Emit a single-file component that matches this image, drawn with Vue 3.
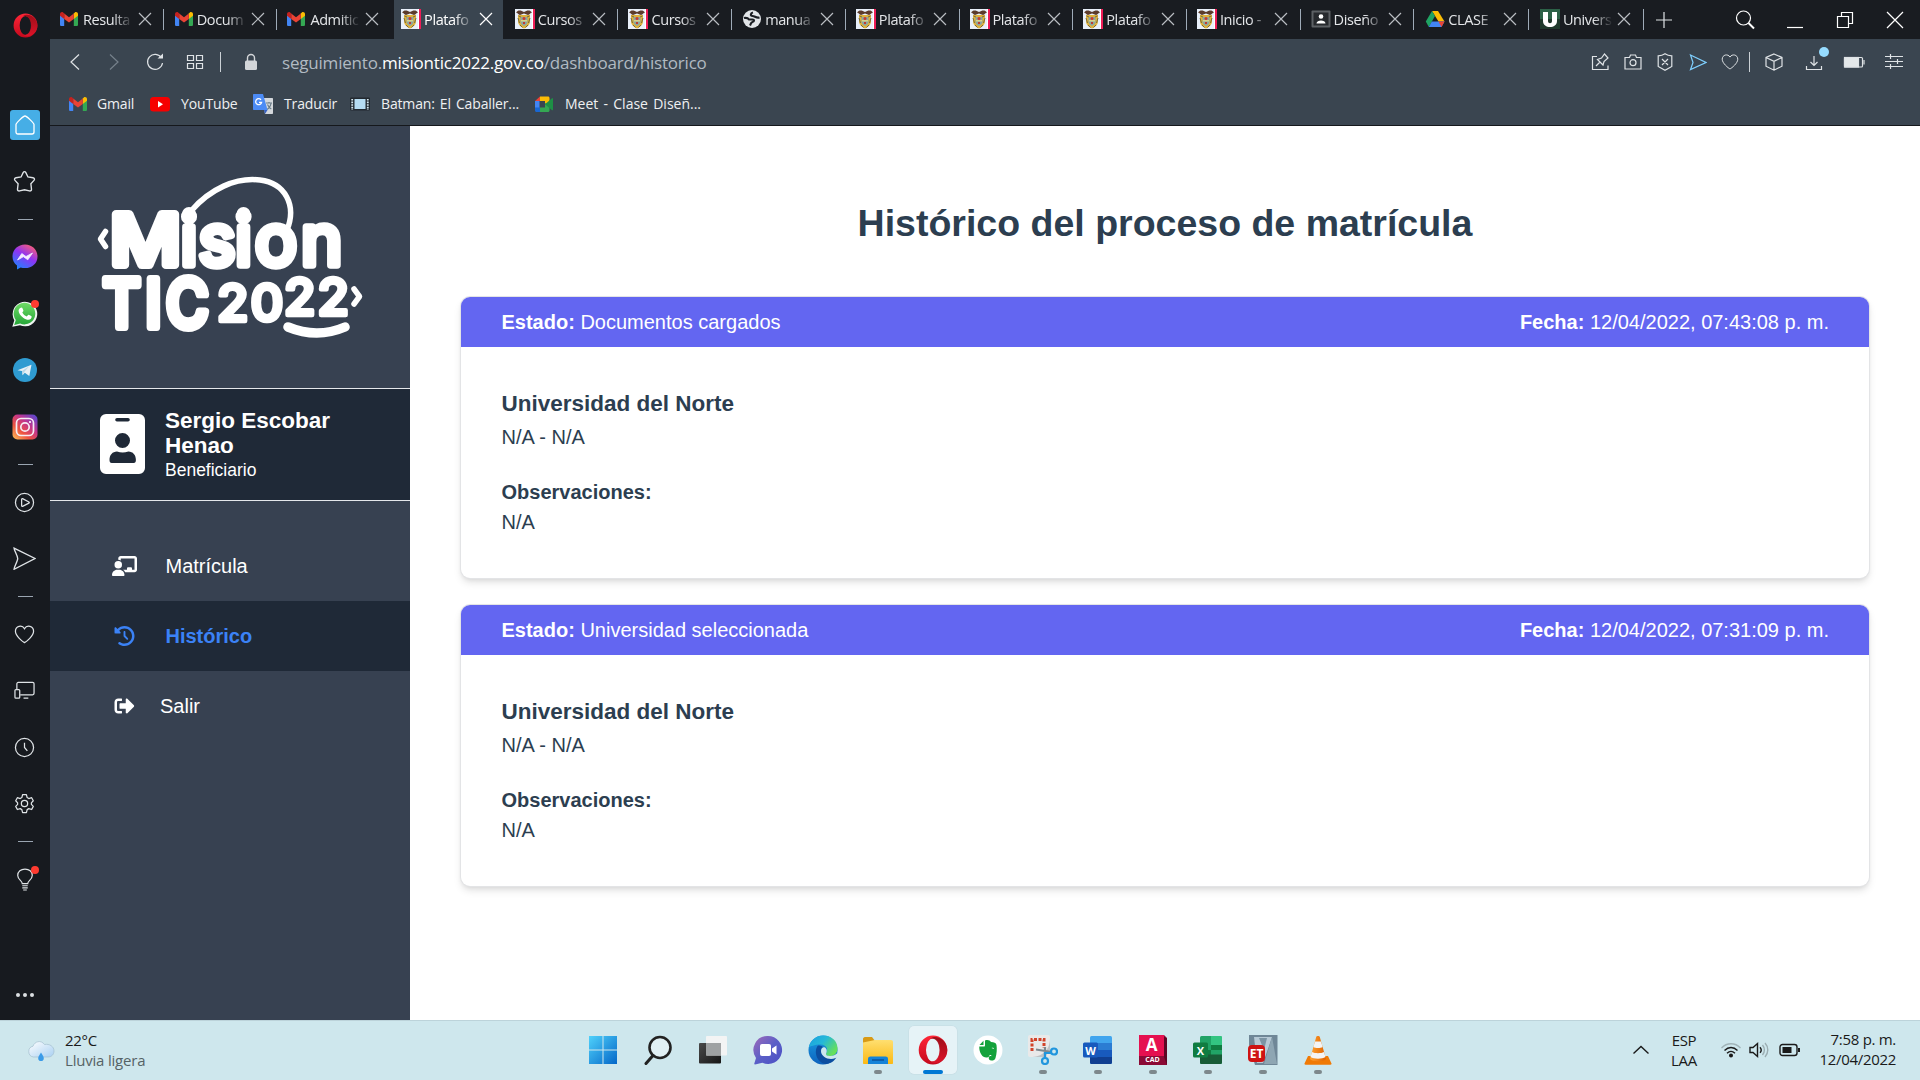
<script setup>
const tabs = [
  { icon: 'gmail', label: 'Resulta' },
  { icon: 'gmail', label: 'Docum' },
  { icon: 'gmail', label: 'Admitic' },
  { icon: 'crest', label: 'Platafo', active: true },
  { icon: 'crest', label: 'Cursos' },
  { icon: 'crest', label: 'Cursos' },
  { icon: 'globe', label: 'manua' },
  { icon: 'crest', label: 'Platafo' },
  { icon: 'crest', label: 'Platafo' },
  { icon: 'crest', label: 'Platafo' },
  { icon: 'crest', label: 'Inicio -' },
  { icon: 'classroom', label: 'Diseño' },
  { icon: 'drive', label: 'CLASE' },
  { icon: 'uni', label: 'Univers' },
]
const bookmarks = [
  { icon: 'gmail', label: 'Gmail', w: 82 },
  { icon: 'youtube', label: 'YouTube', w: 103 },
  { icon: 'translate', label: 'Traducir', w: 97 },
  { icon: 'film', label: 'Batman: El Caballer...', w: 184 },
  { icon: 'meet', label: 'Meet - Clase Diseñ...', w: 180 },
]
const rail = [
  'home', 'star', '-', 'messenger', 'whatsapp', 'telegram', 'instagram', '-',
  'play', 'send', '-', 'heart', 'devices', 'clock', 'gear', '-', 'bulb',
]
const actions = ['pin', 'camera', 'shield', 'flow', 'heart']
const tools = ['cube', 'download', 'battery', 'sliders']
const records = [
  { state: 'Documentos cargados', date: '12/04/2022, 07:43:08 p. m.' },
  { state: 'Universidad seleccionada', date: '12/04/2022, 07:31:09 p. m.' },
]
const apps = [
  { id: 'windows' }, { id: 'search' }, { id: 'taskview' }, { id: 'chat' }, { id: 'edge' },
  { id: 'explorer', open: true }, { id: 'opera', active: true }, { id: 'evernote' },
  { id: 'snip', open: true }, { id: 'word', open: true, mark: 'W' }, { id: 'autocad', open: true, mark: 'A', sub: 'CAD' },
  { id: 'excel', open: true, mark: 'X' }, { id: 'etabs', open: true, mark: 'ET' }, { id: 'vlc', open: true },
]
</script>

<template>
  <div class="desktop">
    <svg class="defs" aria-hidden="true">
      <defs>
        <linearGradient id="gOpera" x1="0" y1="0" x2="0" y2="1"><stop offset="0" stop-color="#ff2637" /><stop offset="1" stop-color="#c4091d" /></linearGradient>
        <linearGradient id="gOperaR" x1="0" y1="0" x2="0" y2="1"><stop offset="0" stop-color="#8e0a14" /><stop offset="1" stop-color="#e0142a" /></linearGradient>
        <linearGradient id="gMess" x1="0.2" y1="1" x2="0.8" y2="0"><stop offset="0" stop-color="#1a86ff" /><stop offset=".55" stop-color="#9033f2" /><stop offset="1" stop-color="#ff6070" /></linearGradient>
        <linearGradient id="gInsta" x1="0" y1="1" x2="0.9" y2="0"><stop offset="0" stop-color="#fdc45a" /><stop offset=".35" stop-color="#ee5340" /><stop offset=".65" stop-color="#c1358e" /><stop offset="1" stop-color="#5a48cf" /></linearGradient>
        <linearGradient id="gWin" x1="0" y1="0" x2="1" y2="1"><stop offset="0" stop-color="#4fd1fb" /><stop offset="1" stop-color="#0467c8" /></linearGradient>
        <linearGradient id="gChat" x1="0" y1="0" x2="1" y2="1"><stop offset="0" stop-color="#a06ab8" /><stop offset=".5" stop-color="#5b5fc7" /><stop offset="1" stop-color="#4a4fc4" /></linearGradient>
        <linearGradient id="gEdge" x1="0" y1="0" x2="1" y2="0.6"><stop offset="0" stop-color="#1aa0e0" /><stop offset=".5" stop-color="#25b8d8" /><stop offset="1" stop-color="#66e05a" /></linearGradient>
        <linearGradient id="gEdge2" x1="0" y1="0" x2="0" y2="1"><stop offset="0" stop-color="#1b9de2" /><stop offset="1" stop-color="#0d62bd" /></linearGradient>
        <linearGradient id="gFolder" x1="0" y1="0" x2="0" y2="1"><stop offset="0" stop-color="#ffdf70" /><stop offset="1" stop-color="#fbb914" /></linearGradient>
        <linearGradient id="gCloud" x1="0" y1="0" x2="1" y2="1"><stop offset="0" stop-color="#ffffff" /><stop offset="1" stop-color="#a9d0f2" /></linearGradient>
        <linearGradient id="gCone" x1="0" y1="0" x2="1" y2="0"><stop offset="0" stop-color="#ffa230" /><stop offset="1" stop-color="#e06200" /></linearGradient>
        <linearGradient id="gGreen" x1="0" y1="0" x2="0" y2="1"><stop offset="0" stop-color="#6fdb66" /><stop offset="1" stop-color="#25a538" /></linearGradient>
        <linearGradient id="gDark" x1="0" y1="0" x2="1" y2="1"><stop offset="0" stop-color="#4a4a4a" /><stop offset="1" stop-color="#161616" /></linearGradient>
      </defs>

      <!-- favicons and bookmarks -->
      <symbol id="gmail" viewBox="0 0 20 20">
        <path d="M1 5.500v10.200c0 .7.6 1.300 1.300 1.300H5.200V8.500z" fill="#4285f4" />
        <path d="M19 5.500v10.200c0 .7-.6 1.300-1.300 1.300H14.800V8.500z" fill="#34a853" />
        <path d="M14.800 4.600V10L19 6.800V5c0-1.700-1.900-2.600-3.200-1.600z" fill="#fbbc04" />
        <path d="M5.200 10V4.600L10 8.200l4.800-3.600V10L10 13.600z" fill="#ea4335" />
        <path d="M1 5v1.800L5.200 10V4.600L4.200 3.400C2.900 2.400 1 3.300 1 5z" fill="#c5221f" />
      </symbol>
      <symbol id="crest" viewBox="0 0 20 20">
        <rect width="20" height="20" fill="#e9f0fa" /><rect x="17" width="1" height="20" fill="#fff" /><rect x="18" width="2" height="20" fill="#ee1c56" />
        <path d="M3 6h12v6c0 4-3 6-6 7.500C6 18 3 16 3 12z" fill="#dfb23a" />
        <path d="M1 3.500C3 .5 6 1 9 3c3-2 6-2.500 8 .5-2 0-2 2.500-4 2.500L9 4.500 5 6C3 6 3 3.500 1 3.500z" fill="#5c3b2b" />
        <path d="M5.500 8h7v5c0 2-2 3.200-3.500 3.900C7.500 16.200 5.500 15 5.500 13z" fill="#8ba6a0" />
        <path d="M6 11h6v1.500H6z" fill="#d9d38a" /><circle cx="9" cy="9.500" r="1.500" fill="#c93a2e" /><path d="M8 13h2v2H8z" fill="#be3b33" />
        <path d="M3 9l1.500 5M15 9l-1.500 5M5 16l2.500 2.500M13 16l-2.500 2.500M3.500 7l2.500 1M14.500 7L12 8" stroke="#7a6a3a" stroke-width="1" />
      </symbol>
      <symbol id="globe" viewBox="0 0 20 20">
        <circle cx="10" cy="10" r="9" fill="#e3e6e9" />
        <path d="M2 9c2-.5 4 0 5 1.500h3.500c2 0 2 2 0 2.500s-1.500 2-2.500 3.500M11 3.500C8.500 4 8 7 10.500 7s3.500 2.500 7 1.500" fill="none" stroke="#1b1e23" stroke-width="2.200" />
      </symbol>
      <symbol id="classroom" viewBox="0 0 20 20">
        <rect x=".5" y="1.500" width="19" height="17" rx="1" fill="#5c6064" /><rect x="2.500" y="3.500" width="15" height="13" fill="#26292d" />
        <circle cx="10" cy="7.500" r="2.300" fill="#fff" /><path d="M5.500 14.500c0-4 9-4 9 0z" fill="#fff" />
      </symbol>
      <symbol id="drive" viewBox="0 0 20 20">
        <path d="M7 2h6l6.500 10.500h-6z" fill="#fbbc04" /><path d="M7 2L.8 12.500 3.800 18l6.200-11z" fill="#1fa463" />
        <path d="M3.800 18l3-5.500h12.700L16.500 18z" fill="#4285f4" /><path d="M13.500 12.500h6L16.500 18z" fill="#ea4335" />
      </symbol>
      <symbol id="uni" viewBox="0 0 20 20">
        <rect width="20" height="20" fill="#2c6147" /><rect y="10" width="20" height="10" fill="#203a2d" />
        <path d="M3 3h5v9c0 3 4 3 4 0V3h5v9c0 8-14 8-14 0z" fill="#fff" />
      </symbol>
      <symbol id="youtube" viewBox="0 0 20 20"><rect y="3" width="20" height="14.500" rx="3.500" fill="#f60000" /><path d="M8 7l5 3.200-5 3.200z" fill="#fff" /></symbol>
      <symbol id="translate" viewBox="0 0 20 20">
        <path d="M9 4h10c.6 0 1 .4 1 1v14c0 .6-.4 1-1 1h-7z" fill="#d4d8dc" /><path d="M13 9h6M16 8v1.500M14 15.500c2.500-1.500 3.500-3 4-6M14.500 10.500c.8 2 2 3.500 3.800 4.500" stroke="#6a7c88" stroke-width="1.100" fill="none" />
        <path d="M1 0h9l4.500 16H1c-.6 0-1-.4-1-1V1c0-.6.4-1 1-1z" fill="#4c8bf5" /><path d="M14.500 16L12 20l-1-4z" fill="#3460c4" />
        <path d="M8 5.800A3 3 0 1 0 8.600 8.300H6" stroke="#fff" stroke-width="1.300" fill="none" />
      </symbol>
      <symbol id="film" viewBox="0 0 20 20">
        <rect y="3.500" width="20" height="13" rx="1" fill="#222930" /><rect x="4.500" y="5" width="11" height="10" fill="#b6dcf2" />
        <path d="M2.200 5v11M17.800 5v11" stroke="#d5e6ee" stroke-width="1.800" stroke-dasharray="1.600 1" />
      </symbol>
      <symbol id="meet" viewBox="0 0 20 20">
        <path d="M1 7l5-4.500V7z" fill="#ea4335" /><path d="M1 7h4.500v7H1z" fill="#4285f4" /><path d="M1 13.500h5V18H2.500C1.600 18 1 17.400 1 16.500z" fill="#1967d2" />
        <path d="M6 2.500h8c.9 0 1.500.6 1.500 1.500v5L11 10V7H6z" fill="#fbbc04" /><path d="M6 13.500h5V9l4.500 2v5.500c0 .9-.6 1.500-1.500 1.500H6z" fill="#34a853" />
        <path d="M11 10.200l7-6c.4-.3 1 0 1 .5v11c0 .5-.6.8-1 .5z" fill="#1e9045" />
      </symbol>

      <!-- thin line icons -->
      <symbol id="x" viewBox="0 0 16 16"><path d="M2 2l12 12M14 2L2 14" /></symbol>
      <symbol id="home" viewBox="0 0 20 20"><path d="M1 9.500C1 8.500 8 1 10 1s9 7.500 9 8.500V17c0 1.300-.7 2-2 2H3c-1.300 0-2-.7-2-2z" /></symbol>
      <symbol id="star" viewBox="0 0 22 22"><path d="M11 1.500c.6 0 1 .4 1.300 1l2 4.200 4.800.7c1.400.2 1.900 1.500 1 2.500l-3 3.200.6 5.300c.1 1.200-.9 1.900-2 1.600L11 18.900 6.300 20c-1.100.3-2.100-.4-2-1.600l.6-5.300-3-3.200c-.9-1-.4-2.300 1-2.500l4.800-.7 2-4.200c.3-.6.7-1 1.300-1z" /></symbol>
      <symbol id="play" viewBox="0 0 22 22"><circle cx="11" cy="11" r="9.500" /><path d="M8 7.600c0-.6.5-.8 1-.6l6.600 3.400c.6.300.6.900 0 1.200L9 15c-.5.200-1 0-1-.6z" /></symbol>
      <symbol id="send" viewBox="0 0 22 22"><path d="M1 1l20 10L1 21.300c0-2.300 3.500-7.600 3.500-10.300S1 3.500 1 1z" /></symbol>
      <symbol id="heart" viewBox="0 0 22 22"><path d="M11 5C8.500.5 1.500 2 1.500 7.600 1.500 12.500 9 18.500 11 19.500c2-1 9.500-7 9.500-11.900C20.500 2 13.500.5 11 5z" /></symbol>
      <symbol id="devices" viewBox="0 0 22 22"><path d="M3 9.500V4c0-.8.6-1.500 1.500-1.500h15c.9 0 1.500.7 1.500 1.500v10c0 .9-.6 1.500-1.500 1.500H6.500M10 19h5" /><rect x="1" y="10" width="5" height="9" rx="1" /></symbol>
      <symbol id="clock" viewBox="0 0 22 22"><circle cx="11" cy="11" r="9.500" /><path d="M11 6v5l3 3.500" /></symbol>
      <symbol id="gear" viewBox="0 0 22 22"><circle cx="11" cy="11" r="3.300" /><path d="M9 1.800h4l.8 3 1.700 1 3-.9 1.700 3.200-2 2.200v1.600l2 2.100-1.700 3.300-3-.9-1.700 1-.8 3.200H9l-.8-3.200-1.700-1-3 .9L1.800 14l2-2.100v-1.600l-2-2.200 1.700-3.200 3 .9 1.700-1z" stroke-linejoin="round" /></symbol>
      <symbol id="bulb" viewBox="0 0 22 26"><path d="M8 17c0-3-5-4.500-5-9 0-4.300 3.500-7 8-7s8 2.700 8 7c0 4.500-5 6-5 9zM8 19.300h6M8 21.600h6M9 24h4" /></symbol>
      <symbol id="pin" viewBox="0 0 18 18"><path d="M6 3.500H1.500v13H17v-4M5 13l4-4M6.500 6.500l5.500 5.500 1-3.500 4-3.500-3.500-4-3 4z" /></symbol>
      <symbol id="camera" viewBox="0 0 18 18"><path d="M1 4.500h4.500L6.500 2h5l1 2.500H17v11.500H1z" /><circle cx="9" cy="9.700" r="3" /></symbol>
      <symbol id="shield" viewBox="0 0 18 18"><path d="M9 .8c2 1.400 4 2 6.800 2V13.500L9 17.300l-6.800-3.800V2.800C5 2.800 7 2.200 9 .8zM6 6l6 6M12 6l-6 6" /></symbol>
      <symbol id="flow" viewBox="0 0 18 18"><path d="M1.500 2L17 9.500 1.500 16.500 4 9.500z" /></symbol>
      <symbol id="cube" viewBox="0 0 18 18"><path d="M9 1l8 3.500v8.700L9 17.200l-8-4V4.500zM1 4.500l8 3.800 8-3.800M9 8.300v9" /></symbol>
      <symbol id="download" viewBox="0 0 18 18"><path d="M9 3v9M5.500 9L9 12.500 12.500 9M1.500 13v3.500h15V13" /></symbol>
      <symbol id="battery" viewBox="0 0 22 18"><rect x="1.500" y="4.500" width="18" height="9.500" rx="1" /><rect x="1.500" y="4.500" width="14" height="9.500" fill="#e4e8ea" /><path d="M21 7v4.500" /></symbol>
      <symbol id="sliders" viewBox="0 0 18 18"><path d="M0 3.500h18M0 8.500h18M0 13.500h18M5.500 1v5M12.500 6v5M5.500 11v5" /></symbol>

      <!-- coloured app badges -->
      <symbol id="messenger" viewBox="0 0 26 26">
        <path d="M13 .5C5.800.5.5 5.700.5 12.500c0 3.800 1.500 6.700 4.500 9v4l3.700-2a14 14 0 0 0 4.300.6c7.200 0 12.500-4.800 12.500-11.600S20.200.5 13 .5z" fill="url(#gMess)" />
        <path d="M5.500 16l4.300-6.500 4.200 3 6.500-3.500-4.700 6.800-4.400-3.100z" fill="#f3ecff" stroke="#f3ecff" stroke-width=".8" />
      </symbol>
      <symbol id="whatsapp" viewBox="0 0 26 26">
        <path d="M.3 25.700l2-6.500A12.300 12.300 0 1 1 8 24.300z" fill="#eef3f0" /><path d="M2.200 24l1.600-5A10.800 10.800 0 1 1 8.200 22.500z" fill="url(#gGreen)" />
        <path d="M8.300 7c1-1 1.800-.8 2.300.6l.8 1.900c.2.600-.7 1.500-1.100 2 1 1.900 2.500 3.200 4.500 4 .6-.7 1.300-2 2-1.700l2.400 1.200c.9.4.3 2-.3 2.700-1.700 1.800-4.900 1-7.400-.8-2.900-2.200-4.900-4.900-4.900-7.200 0-1.100.6-2 1.700-2.700z" fill="#fff" />
      </symbol>
      <symbol id="telegram" viewBox="0 0 26 26"><circle cx="13" cy="13" r="12" fill="#2f9bd1" /><path d="M5.500 13.200L19.500 7.800 17.300 19l-4.500-3.300-2.200 2.600-.6-4.300z" fill="#e8f1f6" /><path d="M10 14l7.500-5-5.600 6.300-1.300 3z" fill="#b9d6e6" /></symbol>
      <symbol id="instagram" viewBox="0 0 26 26"><rect x=".5" y=".5" width="25" height="25" rx="5" fill="url(#gInsta)" /><g fill="none" stroke="#f6edf4" stroke-width="1.700"><rect x="4.500" y="4.500" width="17" height="17" rx="4.500" /><circle cx="13" cy="13" r="4.200" /></g><circle cx="18" cy="8" r="1.100" fill="#fff" /></symbol>

      <!-- taskbar apps -->
      <symbol id="windows" viewBox="0 0 30 30"><path d="M1 1h13.500v13.500H1zM15.500 1H29v13.500H15.500zM1 15.500h13.500V29H1zM15.500 15.500H29V29H15.500z" fill="url(#gWin)" /></symbol>
      <symbol id="search" viewBox="0 0 30 30"><circle cx="17" cy="12.500" r="10.500" fill="#ffffff66" stroke="#222" stroke-width="2.600" /><path d="M10 20.500L3 28.500" stroke="#222" stroke-width="3" stroke-linecap="round" /></symbol>
      <symbol id="taskview" viewBox="0 0 30 30"><rect x="1" y="8" width="22" height="20.500" rx="1" fill="url(#gDark)" /><rect x="8" y="1" width="21" height="19.500" rx="1" fill="#f4f4f4" opacity=".95" /><path d="M8 8h15v12.500H8z" fill="#9fa2a3" /></symbol>
      <symbol id="chat" viewBox="0 0 30 30"><path d="M15 1a14 14 0 1 1-5.600 26.800L2 29.500c-.6 0-.9-.4-.7-1L3 23A14 14 0 0 1 15 1z" fill="url(#gChat)" /><rect x="7" y="9" width="11" height="12" rx="2" fill="#fff" /><path d="M19 13.500l4.500-3v9l-4.500-3z" fill="#fff" /></symbol>
      <symbol id="edge" viewBox="0 0 30 30">
        <circle cx="15" cy="15" r="14.500" fill="url(#gEdge2)" />
        <path d="M.8 12.500C2.500 5 8.500.5 15.500.5 23.500.5 29.500 6 29.500 13.500c0 5-3.500 7.500-7.500 7.500-3.500 0-4.500-1.500-4-2.500 2.500-3.500 1-9-5.500-9-6 0-10.500 2-11.700 3z" fill="url(#gEdge)" />
        <path d="M9.500 11C5.500 17 9 28 18 29c4.500-.5 8.500-3 10.500-6.800.3-.6-.3-1-.8-.6-6.200 3.200-14.700.4-14.700-5.600 0-1.800.8-3 2-3.800-1-1.200-3.800-2.200-5.500-1.200z" fill="#0c4ea0" />
        <path d="M13 16c0-2.200 1.500-4 3.200-3.800 2.600.6 3.300 4 1.800 6.300-.5 1.700 1.500 2.500 4 2.500 3 0 5.500-1 7.500-3l.5 4.500-2.500.5c-6 3-14.500-1-14.500-7z" fill="#cde7ee" />
      </symbol>
      <symbol id="explorer" viewBox="0 0 30 30"><path d="M0 4c0-1 .7-2 2-2h7l3 4v4H0z" fill="#d89a16" /><path d="M0 7.500L12 5h16c1.200 0 2 .8 2 2V28c0 .6-.4 1-1 1H1c-.6 0-1-.4-1-1z" fill="url(#gFolder)" /><path d="M5 29v-5c0-1.700 1-2.500 2.500-2.500h15c1.500 0 2.500.8 2.500 2.500v5z" fill="#1583d8" /><path d="M9 25h12" stroke="#0c4f96" stroke-width="1.400" /></symbol>
      <symbol id="opera" viewBox="0 0 30 30"><path fill-rule="evenodd" d="M15 .5a14.300 14.500 0 1 1 0 29 14.300 14.500 0 1 1 0-29zm0 3a7 11.500 0 1 0 0 23 7 11.500 0 1 0 0-23z" fill="url(#gOpera)" /><path d="M12 3.800C18-1 29.300 5 29.300 15S18 31 12 26.200c5 1.300 9.500-3.200 9.500-11.200S17 2.500 12 3.800z" fill="url(#gOperaR)" opacity=".85" /></symbol>
      <symbol id="evernote" viewBox="0 0 30 30"><circle cx="15" cy="15" r="14.500" fill="#fff" /><path d="M12 5.500c3-1 5 0 6 1.500 3 0 5 .8 5.500 3 .6 4 .3 9-1 13-.6 2-2 2.500-4 2.500-2.300 0-3-1.500-2.700-3.300.3-1.200 2-1.500 2.700-1 0-1.300-2-1.700-2.500.3-1 1.500-4 1.300-5.500.3C7.500 19.800 6 15 6.300 11.500H11c.7 0 1-.5 1-1z" fill="#14a23b" /><path d="M6.500 10l4-4.300V10z" fill="#14a23b" /><path d="M18.500 13c1.500-.8 2.500 0 2.500 1z" fill="#fff" /></symbol>
      <symbol id="snip" viewBox="0 0 30 30"><rect x="0" y="0" width="22" height="22" rx="2" fill="#e9e9e9" /><path d="M22 3v13l-6 6H3c9 0 19-5 19-19z" fill="#bfc3c6" /><path d="M4 16V4.500h12V13" fill="none" stroke="#d2432a" stroke-width="3" stroke-dasharray="3 1.500" /><path d="M8 14.500l15.500 2.500M17 22V12" stroke="#7d8990" stroke-width="2.200" /><g fill="none" stroke="#2196dd" stroke-width="2.200"><circle cx="26" cy="16.500" r="3" /><circle cx="17" cy="26" r="3" /><path d="M17 23v-5h6" /></g></symbol>
      <symbol id="word" viewBox="0 0 30 30"><rect x="7" y="1" width="22" height="28" rx="1.500" fill="#41a5ee" /><path d="M7 8h22v7H7z" fill="#2b7cd3" /><path d="M7 15h22v7H7z" fill="#185abd" /><path d="M7 22h22v5.500c0 .9-.6 1.500-1.500 1.500h-19C7.600 29 7 28.400 7 27.500z" fill="#103f91" /><rect x="0" y="7.500" width="15" height="15" rx="1.500" fill="#185abd" /></symbol>
      <symbol id="excel" viewBox="0 0 30 30"><rect x="7" y="1" width="22" height="28" rx="1.500" fill="#21a366" /><path d="M18 1h9.500c.9 0 1.500.6 1.500 1.500V10H18z" fill="#33c481" /><path d="M7 15h11v7H7zM18 10h11v5H18z" fill="#107c41" /><path d="M7 19.500h22v8c0 .9-.6 1.500-1.500 1.500h-19C7.600 29 7 28.400 7 27.500z" fill="#185c37" /><rect x="0" y="7.500" width="15" height="15" rx="1.500" fill="#107c41" /></symbol>
      <symbol id="autocad" viewBox="0 0 30 30"><path d="M1 0h25l3 3v27H1z" fill="#8b0a35" /><path d="M1 0h25v21H1z" fill="#e51050" /><path d="M26 2l3 1.500V30l-3-8z" fill="#5d0724" /></symbol>
      <symbol id="etabs" viewBox="0 0 30 30"><path d="M1 0h28.500v30H7L1 10z" fill="#6f8797" /><path d="M6 2h18l-4 12-5 14H9z" fill="#b7cad6" /><path d="M11 3h8l-3 12z" fill="#7c95a4" /><path d="M24 2l5 27H16z" fill="#8ea6b3" /><rect x="0" y="10" width="17" height="17" rx="4" fill="#cf1313" /></symbol>
      <symbol id="vlc" viewBox="0 0 30 30"><path d="M5 21h20l3.500 7.500c.2.700-.2 1.200-1 1.200h-25c-.8 0-1.200-.5-1-1.200z" fill="#f07a05" /><path d="M13.200 2c.3-1.300 3.300-1.300 3.600 0L23 24c-2 3-14 3-16 0z" fill="url(#gCone)" /><path d="M12 6.500h6l1.600 5.500c-2 1.300-7.200 1.300-9.200 0zM9 17c3 1.600 9 1.600 12 0l1.500 5c-3.500 2.300-11.500 2.300-15 0z" fill="#f4f4f4" /></symbol>
    </svg>

    <div class="browser">
      <nav class="rail">
        <svg class="brand"><use href="#opera" /></svg>
        <template v-for="(r, i) in rail" :key="i">
          <div v-if="r === '-'" class="dash"><span></span></div>
          <div v-else class="slot" :class="'s-' + r">
            <span class="box"><svg class="line"><use :href="'#' + r" /></svg><i v-if="r === 'whatsapp' || r === 'bulb'" class="dot"></i></span>
          </div>
        </template>
        <div class="more"><span></span><span></span><span></span></div>
      </nav>

      <div class="window">
        <header class="tabbar">
          <div v-for="(t, i) in tabs" :key="i" class="tab" :class="{ active: t.active, bare: i === 2, late: i === 12 || i === 13 }">
            <svg class="fav"><use :href="'#' + t.icon" /></svg>
            <span class="label">{{ t.label }}</span>
            <svg class="line close"><use href="#x" /></svg>
          </div>
          <svg class="line plus" viewBox="0 0 16 16"><path d="M8 0v16M0 8h16" /></svg>
          <div class="controls">
            <svg class="line" viewBox="0 0 20 20"><circle cx="8.500" cy="8" r="7" /><path d="M13.500 13l5.500 5.500" stroke-width="2" /></svg>
            <svg class="line min" viewBox="0 0 20 20"><path d="M2 17.500h16" /></svg>
            <svg class="line" viewBox="0 0 20 20"><path d="M2.500 6.500h11v11h-11zM6.500 6V2.500h11v11H14" /></svg>
            <svg class="line" viewBox="0 0 20 20"><path d="M2 2l16 16M18 2L2 18" /></svg>
          </div>
        </header>

        <div class="toolbar">
          <svg class="line nav" viewBox="0 0 18 18"><path d="M13 1.500L5 9l8 7.500" /></svg>
          <svg class="line nav dim" viewBox="0 0 18 18"><path d="M5 1.500L13 9l-8 7.500" /></svg>
          <svg class="line nav" viewBox="0 0 18 18"><path d="M15.500 5A7.500 7.500 0 1 0 16.500 10" /><path d="M11.500 5.500h5.500v-5z" fill="#dfe3e6" stroke="none" /></svg>
          <svg class="line nav" viewBox="0 0 18 18"><path d="M1.500 2.500h6v5h-6zM10.500 2.500h6v5h-6zM1.500 10.500h6v5h-6zM10.500 10.500h6v5h-6z" /></svg>
          <i class="vr"></i>
          <svg class="lock" viewBox="0 0 14 18"><path d="M3.500 8V5a3.500 3.500 0 0 1 7 0v3" fill="none" stroke="#d3d6d9" stroke-width="1.400" /><rect x="1" y="7.500" width="12" height="9.500" rx="1.500" fill="#d3d6d9" /></svg>
          <span class="url">seguimiento.<b>misiontic2022.gov.co</b>/dashboard/historico</span>
          <div class="actions">
            <span v-for="a in actions" :key="a" class="act"><svg class="line" :class="'a-' + a"><use :href="'#' + a" /></svg></span>
            <i class="vr"></i>
            <span v-for="a in tools" :key="a" class="act wide"><svg class="line" :class="'a-' + a"><use :href="'#' + a" /></svg><i v-if="a === 'download'" class="blip"></i></span>
          </div>
        </div>

        <div class="bookmarks">
          <span v-for="b in bookmarks" :key="b.label" class="bm" :style="{ width: b.w + 'px' }">
            <svg><use :href="'#' + b.icon" /></svg><span>{{ b.label }}</span>
          </span>
        </div>

        <div class="page">
          <aside class="side">
            <div class="logo">
              <svg viewBox="0 0 280 180" width="280" height="180">
                <g fill="#fff" stroke="#fff" stroke-linejoin="round" stroke-linecap="round" font-family="Inter, sans-serif" font-weight="500">
                  <text y="105" x="18" font-size="70" stroke-width="8" transform="scale(1.11 1)">M</text>
                  <text y="105" x="90.500 108.500 145 165 211" font-size="70" font-weight="400" stroke-width="7.500">ision</text>
                  <text y="167" x="14.500 63 86.500" font-size="66" stroke-width="8" transform="scale(.88 1)">TIC</text>
                  <text y="160.500" x="127 160.500" font-size="51" stroke-width="4.500">20</text>
                  <text y="154.500" x="194 227.500" font-size="51" stroke-width="4.500">22</text>
                  <g fill="none">
                    <path d="M101 51C120 29 146 17 170 20c25 3 37 25 27 50" stroke-width="5.500" />
                    <path d="M15.500 71.500l-5 7.500 5 7.500" stroke-width="5.500" /><path d="M264 129l5.500 7.500-5.500 7.500" stroke-width="5.500" />
                    <path d="M198 167q29 12 57 0" stroke-width="9.500" />
                  </g>
                  <circle cx="99" cy="54" r="7" stroke="none" /><circle cx="153.500" cy="54" r="7" stroke="none" />
                </g>
              </svg>
            </div>
            <div class="user">
              <svg viewBox="0 0 45 60"><path fill-rule="evenodd" d="M6 0h33a6 6 0 0 1 6 6v48a6 6 0 0 1-6 6H6a6 6 0 0 1-6-6V6a6 6 0 0 1 6-6zm11 4a1.800 1.800 0 0 0 0 3.600h11A1.800 1.800 0 0 0 28 4zm5.500 15a7.500 7.500 0 1 0 0 15 7.500 7.500 0 1 0 0-15zM17 37.500c-4.500 0-7.500 3.500-7.500 8.500 0 1.800.7 3 2.200 3h22c1.500 0 2.200-1.200 2.200-3 0-5-3-8.500-7.500-8.500-4 1.300-7.500 1.300-11.400 0z" fill="#fff" /></svg>
              <div><strong>Sergio Escobar Henao</strong><span>Beneficiario</span></div>
            </div>
            <ul class="menu">
              <li><svg viewBox="0 0 640 512"><path d="M160 64c0-35.300 28.700-64 64-64H576c35.300 0 64 28.700 64 64V352c0 35.300-28.700 64-64 64H336.800c-11.800-25.500-29.900-47.500-52.400-64H384V320c0-17.700 14.300-32 32-32h64c17.700 0 32 14.300 32 32v32h64V64H224v49.100C205.200 102.200 183.300 96 160 96V64zm0 64a96 96 0 1 1 0 192 96 96 0 1 1 0-192zM133.300 352h53.300C260.300 352 320 411.700 320 485.300c0 14.700-11.900 26.700-26.700 26.700H26.700C11.900 512 0 500.100 0 485.300 0 411.700 59.700 352 133.300 352z" /></svg><span>Matrícula</span></li>
              <li class="current"><svg viewBox="0 0 512 512"><path d="M75 75L41 41C25.900 25.900 0 36.600 0 57.900V168c0 13.300 10.700 24 24 24H134.100c21.400 0 32.100-25.900 17-41l-30.800-30.800C155 85.500 203 64 256 64c106 0 192 86 192 192s-86 192-192 192c-40.800 0-78.600-12.700-109.700-34.400-14.500-10.100-34.400-6.600-44.600 7.900s-6.600 34.400 7.900 44.600C151.200 495 201.700 512 256 512c141.400 0 256-114.600 256-256S397.400 0 256 0C185.300 0 121.300 28.700 75 75zm181 53c-13.300 0-24 10.700-24 24V256c0 6.400 2.500 12.500 7 17l72 72c9.400 9.400 24.600 9.400 33.900 0s9.400-24.600 0-33.900l-65-65V152c0-13.300-10.700-24-24-24z" /></svg><span>Histórico</span></li>
              <li class="exit"><svg viewBox="0 0 512 512"><path d="M497 273L329 441c-15 15-41 4.500-41-17v-96H152c-13.300 0-24-10.700-24-24v-96c0-13.300 10.700-24 24-24h136V88c0-21.400 25.900-32 41-17l168 168c9.300 9.400 9.300 24.600 0 34zM192 436v-40c0-6.600-5.400-12-12-12H96c-17.700 0-32-14.300-32-32V160c0-17.700 14.300-32 32-32h84c6.600 0 12-5.400 12-12V76c0-6.600-5.400-12-12-12H96c-53 0-96 43-96 96v192c0 53 43 96 96 96h84c6.600 0 12-5.400 12-12z" /></svg><span>Salir</span></li>
            </ul>
          </aside>

          <main class="main">
            <h1>Histórico del proceso de matrícula</h1>
            <section v-for="r in records" :key="r.date" class="card">
              <div class="head"><span><b>Estado:</b> {{ r.state }}</span><span><b>Fecha:</b> {{ r.date }}</span></div>
              <div class="body">
                <h2>Universidad del Norte</h2>
                <p>N/A - N/A</p>
                <h3>Observaciones:</h3>
                <p>N/A</p>
              </div>
            </section>
          </main>
        </div>
      </div>
    </div>

    <footer class="taskbar">
      <div class="weather">
        <svg viewBox="0 0 28 22"><path d="M6.500 17A5.500 5.500 0 0 1 6 6.200C7.500 1.500 14 -.5 17.500 4.500c5-1 9.500 2 9.500 6.500 0 3.400-2.500 6-5.800 6z" fill="url(#gCloud)" stroke="#a3bfce" stroke-width=".7" /><path d="M14 12.500c1.500 2.500 2.800 4 2.800 5.800a2.800 2.800 0 0 1-5.600 0c0-1.800 1.300-3.300 2.800-5.800z" fill="#3b9be8" /></svg>
        <div class="forecast"><span>22°C</span><span class="muted">Lluvia ligera</span></div>
      </div>
      <div class="apps">
        <div v-for="a in apps" :key="a.id" class="app" :class="[a.id, { active: a.active, open: a.open }]">
          <svg><use :href="'#' + a.id" /></svg>
          <b v-if="a.mark" class="mark">{{ a.mark }}</b><b v-if="a.sub" class="sub">{{ a.sub }}</b>
          <i></i>
        </div>
      </div>
      <div class="tray">
        <svg class="chev" viewBox="0 0 18 10"><path d="M1.500 8.500L9 1.500l7.500 7" /></svg>
        <div class="lang"><span>ESP</span><span>LAA</span></div>
        <svg class="wifi" viewBox="0 0 20 16"><path d="M.5 6C6 .3 14 .3 19.500 6" opacity=".25" /><path d="M3.500 8.500c4-4 9-4 13 0M6 11.200c2.500-2.300 5.500-2.300 8 0" /><circle cx="10" cy="13.500" r="1.300" fill="#1a1a1a" /></svg>
        <svg class="vol" viewBox="0 0 20 18"><path d="M1 6.500h3L8.500 2.500v13L4 11.500H1zM11 6.200c1.400 1.600 1.400 4 0 5.600" /><path d="M13.500 4c2.500 2.800 2.500 7.200 0 10M16 2c3.700 4 3.700 10 0 14" opacity=".28" /></svg>
        <svg class="bat" viewBox="0 0 22 14"><rect x="1" y="1.500" width="17" height="11" rx="2.500" /><rect x="3.500" y="4" width="9" height="6" fill="#1a1a1a" stroke="none" /><path d="M20 5v4" stroke-width="2" /></svg>
        <div class="time"><span>7:58 p. m.</span><span>12/04/2022</span></div>
      </div>
    </footer>
  </div>
</template>

<style>
body { margin: 0; overflow: hidden; }
</style>

<style scoped>
.desktop { width: 1920px; height: 1080px; display: flex; flex-direction: column; font-family: "Open Sans", "Noto Sans", sans-serif; overflow: hidden; }
.defs { position: absolute; width: 0; height: 0; }
.line { fill: none; stroke: #dfe3e6; stroke-width: 1.2; flex: none; }
.browser { height: 1020px; display: flex; background: #171a1f; }
.window { width: 1870px; display: flex; flex-direction: column; }

.rail { width: 50px; display: flex; flex-direction: column; align-items: center; }
.brand { width: 25px; height: 25px; margin: 13px 0 58.700px 1px; flex: none; }
.slot { height: 56.480px; flex: none; display: flex; align-items: center; }
.box { position: relative; display: flex; align-items: center; justify-content: center; width: 30px; height: 30px; }
.box .line { width: 21px; height: 21px; margin-right: 1px; stroke-width: 1.3; }
.s-home .box { background: #46aee6; border-radius: 3px; }
.s-home .line { width: 20px; height: 20px; margin: 0; stroke: #fff; }
.s-star .line, .s-send .line { width: 23px; height: 23px; }
.s-messenger .line, .s-whatsapp .line, .s-telegram .line, .s-instagram .line { width: 26px; height: 26px; stroke: none; margin: 0; }
.s-bulb .line { width: 20px; height: 24px; margin: 0; }
.dot { position: absolute; width: 8px; height: 8px; border-radius: 50%; background: #ff3b30; right: 1px; top: 1px; }
.dash { height: 19.250px; flex: none; display: flex; align-items: center; }
.dash span { width: 15px; height: 1px; background: #9aa5b1; }
.more { display: flex; gap: 3px; margin-top: 85px; }
.more span { width: 4px; height: 4px; border-radius: 50%; background: #dcdfe2; }

.tabbar { height: 39px; display: flex; align-items: center; background: #191c21; flex: none; }
.tab { box-sizing: border-box; width: 113.700px; height: 39px; padding: 0 0 1px 10px; display: flex; align-items: center; position: relative; flex: none; }
.tab:first-child .fav, .tab.bare .fav { position: relative; right: 1px; }
.tab.late { margin-left: 1px; }
.tab::after { content: ""; position: absolute; right: 0; top: 9px; width: 1px; height: 21px; background: #9fabb8; }
.tab.active { background: linear-gradient(#3a4550, #3a4550) 3px 0 / 109px 100% no-repeat; }
.tab.active::after, .tab.bare::after { display: none; }
.fav { width: 20px; height: 20px; flex: none; }
.label { width: 52px; margin-left: 3px; font-size: 14.500px; letter-spacing: -0.4px; color: #e4e6e9; white-space: nowrap; flex: none; mask-image: linear-gradient(90deg, #000 58%, transparent 96%); }
.close { width: 16px; height: 16px; margin-left: 1.500px; stroke: #b9bdc2; }
.active .close { stroke: #fff; }
.active .label { color: #fff; }
.plus { width: 16px; height: 16px; margin-left: 12px; }
.controls { display: flex; margin-left: auto; padding-right: 15px; gap: 30px; }
.controls svg { width: 20px; height: 20px; stroke: #fff; }

.toolbar { height: 46px; display: flex; align-items: center; background: #3a4550; flex: none; }
.nav { width: 18px; height: 18px; margin-left: 22px; }
.nav:first-child { margin-left: 16px; }
.nav.dim { margin-left: 21px; stroke: #76818b; }
.nav:nth-child(3) { margin-left: 23px; }
.vr { width: 1px; height: 20px; background: #cbd1d6; flex: none; }
.nav + .vr { margin-left: 16px; }
.lock { width: 14px; height: 18px; margin-left: 23px; }
.url { margin-left: 24px; font-size: 17px; letter-spacing: -0.2px; color: #b1bac2; white-space: nowrap; }
.url b { font-weight: 400; color: #fff; }
.actions { margin-left: auto; display: flex; align-items: center; padding-right: 6px; }
.act { width: 32.500px; display: flex; justify-content: center; position: relative; }
.act.wide { width: 40px; }
.act svg { width: 18px; height: 18px; }
.act .a-battery { width: 22px; }
.act .a-flow { stroke: #7fd0ff; }
.actions .vr { margin: 0 4px 0 2.500px; }
.blip { position: absolute; width: 10px; height: 10px; border-radius: 50%; background: #96dcff; right: 5px; top: -6px; }

.bookmarks { height: 40px; display: flex; align-items: center; background: #3a4550; border-bottom: 1px solid #15181c; padding-left: 18px; font-size: 14px; color: #eef0f2; flex: none; letter-spacing: -0.15px; word-spacing: 1.600px; }
.bm { display: flex; align-items: center; flex: none; white-space: nowrap; padding-bottom: 3px; }
.bm svg { width: 20px; height: 20px; margin-right: 11px; flex: none; }
.bm:first-child svg { margin-right: 9px; }
.bm:last-child { letter-spacing: 0; }

.page { height: 894px; display: flex; font-family: "Liberation Sans", Arial, sans-serif; background: #fff; }
.side { width: 360px; background: #374151; color: #fff; }
.logo { height: 263px; border-bottom: 1px solid #e5e7eb; display: flex; padding: 0 0 0 40px; align-items: flex-start; box-sizing: border-box; }
.logo svg { margin-top: 34px; }
.user { box-sizing: border-box; height: 112px; background: #1f2937; border-bottom: 1px solid #e5e7eb; display: flex; align-items: center; padding-left: 50px; }
.user svg { width: 45px; height: 60px; margin: 0 20px 2px 0; }
.user div { width: 190px; display: flex; flex-direction: column; padding-top: 2px; }
.user strong { font-size: 22.500px; line-height: 25px; }
.user span { font-size: 17.500px; line-height: 25px; }
.menu { list-style: none; margin: 30px 0 0; padding: 0; font-size: 20px; }
.menu li { height: 70px; display: flex; align-items: center; }
.menu svg { width: 25px; height: 20px; fill: currentColor; margin: 0 28.500px 0 62px; }
.menu .exit svg { margin-right: 23px; }
.current { background: #1f2937; color: #3b82f6; font-weight: 700; }

.main { flex: 1; padding: 75px 51px 0 50px; color: #2c3e50; }
h1 { margin: 0 0 52px; text-align: center; font-size: 37.500px; line-height: 44px; font-weight: 700; padding-left: 1px; }
.card { box-sizing: border-box; height: 281px; margin: 0 0 27px .500px; border-radius: 9px; overflow: hidden; background: #fff; box-shadow: 0 0 0 1px #e3e4e6, 0 5px 8px -1px rgba(0, 0, 0, .13), 0 2px 5px -1px rgba(0, 0, 0, .08); }
.head { height: 50px; background: #6366f1; color: #fff; font-size: 20px; display: flex; justify-content: space-between; align-items: center; padding: 0 40px 0 41px; }
.body { padding: 42px 41px 0; }
h2 { margin: 0; font-size: 22.500px; line-height: 30px; }
h3 { margin: 25px 0 0; font-size: 20px; line-height: 30px; }
p { margin: 3px 0 0; font-size: 20px; line-height: 30px; }
h3 + p { margin-top: 0; }

.taskbar { box-sizing: border-box; height: 60px; background: #cee7ed; border-top: 1px solid #bcd3da; display: flex; align-items: center; color: #1a1a1a; font-size: 15px; line-height: 20px; letter-spacing: -0.3px; }
.taskbar span { display: block; }
.weather { width: 579px; display: flex; align-items: center; }
.weather svg { width: 28px; height: 22px; margin: 1px 10px 0 27px; }
.forecast, .lang { padding-bottom: 2px; }
.muted { color: #566366; letter-spacing: -0.2px; }
.apps { display: flex; gap: 7px; height: 58px; align-items: center; padding-bottom: 1px; }
.app { width: 48px; height: 48px; border-radius: 5px; display: flex; align-items: center; justify-content: center; position: relative; }
.app svg { width: 30px; height: 30px; }
.app.active { background: #e6f3f7; box-shadow: 0 0 0 .5px #c4dbe2; }
.app i { display: none; position: absolute; bottom: 0; left: 20px; width: 8px; height: 4px; border-radius: 2px; background: #7d888c; }
.app.open i { display: block; }
.app.active i { display: block; width: 20px; left: 14px; background: #0078d4; }
.mark { position: absolute; left: 9px; top: 17px; width: 15px; text-align: center; font-size: 11px; line-height: 15px; color: #fff; letter-spacing: 0; }
.autocad .mark { left: 10px; width: 25px; top: 9px; font-size: 17px; line-height: 20px; }
.etabs .mark { width: 17px; top: 19px; font-size: 12px; line-height: 17px; }
.sub { position: absolute; left: 10px; width: 27px; top: 30px; text-align: center; font-size: 7px; line-height: 8px; color: #fff; letter-spacing: 0; }
.tray { margin-left: auto; display: flex; align-items: center; padding-right: 24px; }
.tray svg { fill: none; stroke: #1a1a1a; stroke-width: 1.4; margin-bottom: 1px; }
.chev { width: 18px; height: 10px; margin-right: 14px; }
.lang { width: 40px; text-align: center; margin-right: 17px; }
.wifi { width: 20px; height: 16px; margin-right: 8px; }
.vol { width: 20px; height: 18px; margin-right: 10px; }
.bat { width: 22px; height: 14px; }
.time { text-align: right; width: 95px; padding-bottom: 3px; white-space: nowrap; }
</style>
